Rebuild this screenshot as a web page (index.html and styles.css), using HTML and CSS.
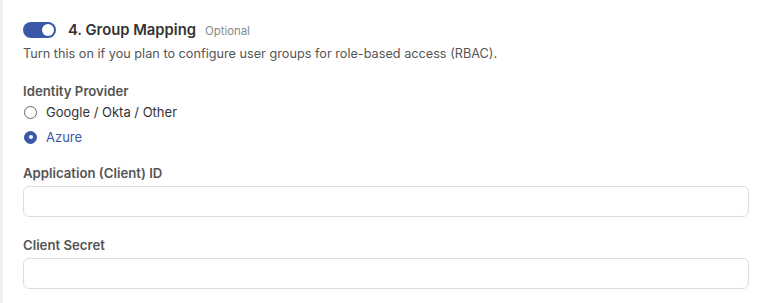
FILE: index.html
```html
<!DOCTYPE html>
<html>
<head>
<meta charset="utf-8">
<link rel="stylesheet" href="styles.css">
</head>
<body>
<div class="page">
  <div class="edge"></div>
  <div class="section">
    <div class="header">
      <span class="toggle"><span class="knob"></span></span>
      <span class="title">4. Group Mapping</span>
      <span class="optional">Optional</span>
    </div>
    <p class="desc">Turn this on if you plan to configure user groups for role-based access (RBAC).</p>

    <div class="field-label idp">Identity Provider</div>
    <div class="radios">
      <label class="radio"><span class="dot"></span><span class="rtext">Google / Okta / Other</span></label>
      <label class="radio checked"><span class="dot"></span><span class="rtext">Azure</span></label>
    </div>

    <div class="field">
      <div class="field-label">Application (Client) ID</div>
      <div class="input"></div>
    </div>
    <div class="field">
      <div class="field-label">Client Secret</div>
      <div class="input"></div>
    </div>
  </div>
</div>
</body>
</html>
```

FILE: styles.css
```css
html, body {
  margin: 0;
  padding: 0;
  background: #ffffff;
}
body {
  font-family: Inter, "Noto Sans", sans-serif;
  color: #333;
  width: 766px;
  height: 303px;
  overflow: hidden;
}
.page {
  display: flex;
  height: 303px;
}
.edge {
  width: 3px;
  background: #f2eeea;
  flex: none;
}
.section {
  flex: 1;
  padding: 20px 17px 0 20px;
  display: flex;
  flex-direction: column;
}
.header {
  display: flex;
  align-items: center;
  height: 20px;
}
.toggle {
  width: 33px;
  height: 16px;
  border-radius: 8px;
  background: #3a58a8;
  display: flex;
  align-items: center;
  justify-content: flex-end;
  padding: 0 2px;
  box-sizing: border-box;
  margin-right: 12px;
}
.knob {
  width: 12px;
  height: 12px;
  border-radius: 50%;
  background: #fff;
}
.title {
  font-size: 14.8px;
  font-weight: 600;
  color: #333;
}
.optional {
  font-size: 11.4px;
  color: #888;
  margin-left: 9px;
  margin-top: 1px;
}
.desc {
  margin: 6px 0 0 0;
  font-size: 12.7px;
  color: #555;
  line-height: 16px;
}
.field-label {
  font-size: 13.2px;
  font-weight: 600;
  color: #555;
  line-height: 16px;
}
.idp {
  margin-top: 21px;
}
.radios {
  display: flex;
  flex-direction: column;
  gap: 9px;
  margin-top: 5px;
}
.radio {
  display: flex;
  align-items: center;
  font-size: 13px;
  color: #333;
  line-height: 16px;
}
.dot {
  width: 13px;
  height: 13px;
  border: 1.5px solid #666;
  border-radius: 50%;
  margin-left: 1px;
  margin-right: 9px;
  flex: none;
  display: flex;
  align-items: center;
  justify-content: center;
  box-sizing: border-box;
}
.radio.checked .dot {
  background: #3a58a8;
  border-color: #3a58a8;
}
.radio.checked .dot::after {
  content: "";
  width: 4px;
  height: 4px;
  border-radius: 50%;
  background: #fff;
}
.radio.checked .rtext {
  color: #3a58a8;
}
.field {
  margin-top: 20px;
  display: flex;
  flex-direction: column;
}
.input {
  margin-top: 5px;
  height: 31px;
  border: 1px solid #dddddd;
  border-radius: 6px;
  box-sizing: border-box;
  background: #fff;
}
```
